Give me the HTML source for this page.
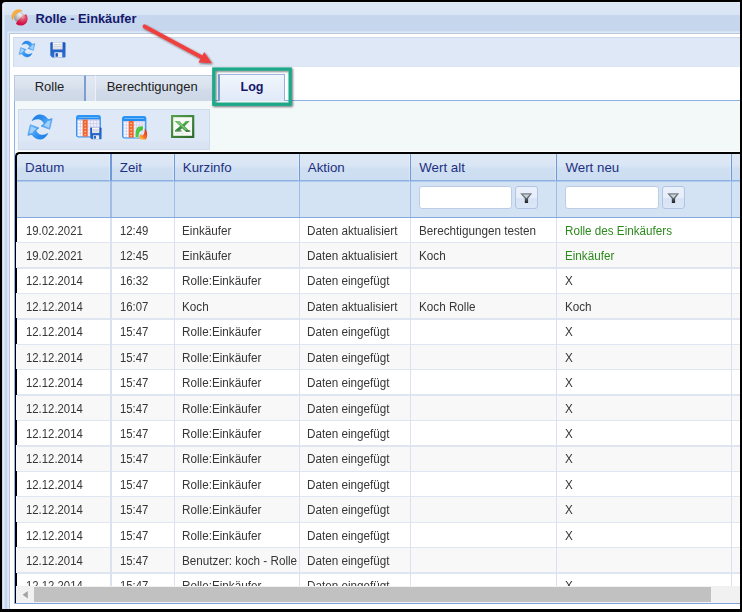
<!DOCTYPE html>
<html lang="de">
<head>
<meta charset="utf-8">
<title>Rolle - Einkäufer</title>
<style>
html,body{margin:0;padding:0;}
body{width:742px;height:612px;overflow:hidden;background:#000;position:relative;font-family:"Liberation Sans",Arial,sans-serif;}
div,span{box-sizing:border-box;}
.abs{position:absolute;}
#win{position:absolute;left:2px;top:2px;width:738px;height:607.4px;overflow:hidden;border-top-left-radius:4px;
 background:linear-gradient(#e4ecf8 0,#dce7f6 1.5px,#d9e5f5 12.8px,#c6d7ee 13.4px,#c4d5ed 40px,#c4d5ed 100%);}
/* left frame bands */
#lf{position:absolute;left:0;top:0;width:2.8px;height:610px;
 background:linear-gradient(90deg,#9fb0c8 0,#e4ecf8 0.8px,#e6eef9 2.2px,rgba(230,238,249,0) 2.8px);}
#body{position:absolute;left:7.6px;top:32px;width:733px;height:578px;background:#fff;box-shadow:0 0 0 1.1px #b7c7de,0 0 0 2.6px #e3ebf6;}
#title{position:absolute;left:33.4px;top:8.6px;font-weight:bold;font-size:12.8px;line-height:16px;color:#15186b;white-space:nowrap;}
#tb1{position:absolute;left:11px;top:35px;width:730px;height:30.4px;background:linear-gradient(#ccd8ea 0,#ccd8ea 0.8px,#dfe8f6 1.2px,#dfe8f6 28.8px,#d9e3f2 29.4px,#e9eff8 30.4px);border-left:1px solid #d3ddee;}
#strip{position:absolute;left:12px;top:65px;width:728px;height:34px;background:#fff;border-bottom:1px solid #8db2e3;}
.tab{position:absolute;top:73px;height:25.6px;font-size:13px;line-height:16px;color:#222;text-align:center;padding-top:2.9px;white-space:nowrap;
 background:linear-gradient(#e0e8f2 0,#dae2ee 40%,#d2dbe9 60%,#cdd7e6 100%);border-top:1px solid #b9c9e2;}
#panel{position:absolute;left:12px;top:99px;width:728px;height:502.4px;background:#f3f8f9;border-left:1px solid #8db2e3;}
#tb2{position:absolute;left:16px;top:107px;width:192px;height:41px;border:1px solid #cfdaeb;
 background:linear-gradient(#dfe8f6 0,#dfe8f6 76%,#dae4f4 82%,#d8e3f4 100%);}
#grid{position:absolute;left:12px;top:148.6px;width:728px;height:452.8px;background:#fff;border-left:1px solid #8db2e3;overflow:hidden;}
#gleft{position:absolute;left:13px;top:150px;width:740px;height:450.5px;border-left:2px solid #000;border-top:2px solid #000;border-top-left-radius:4.5px;}
#hdr{position:absolute;left:15px;top:152px;width:725px;height:64px;background:linear-gradient(#dde8f5 0,#dde8f5 1px,#dae6f5 11px,#cfdff2 15px,#cddef2 25.8px,#8db0e2 26.2px,#8db0e2 27.3px,#d3e3f4 27.7px,#d3e3f4 62.5px,#84a9de 62.9px,#84a9de 64px);}
.hs{position:absolute;top:152px;height:26.6px;width:4px;}
.fs{position:absolute;top:178.6px;height:36.8px;width:4px;}
.ht{position:absolute;top:158.2px;margin-left:0.8px;font-size:13.3px;line-height:16px;color:#1d3080;white-space:nowrap;}
.ds{position:absolute;top:216px;height:367.8px;width:4px;}
#rows{position:absolute;left:0;top:0;width:740px;height:583.8px;overflow:hidden;}
.row{position:absolute;left:0;width:740px;height:24px;}
#rowbg{position:absolute;left:15px;width:725px;height:368.4px;}
#rowbg2{position:absolute;left:14px;width:1px;height:368.4px;}
.c{position:absolute;top:0;height:24px;font-size:12px;line-height:24px;color:#363636;white-space:nowrap;overflow:hidden;}
.c.g{color:#2c8a1c;}
.t{display:inline-block;transform-origin:0 50%;}
.fin{position:absolute;top:183.9px;height:22.8px;background:#fff;border:1px solid #bccde8;border-radius:3px;}
.fbt{position:absolute;top:183.9px;height:22.8px;width:23.3px;border:1px solid #b1c4e3;border-radius:3px;background:linear-gradient(#ebf1fb 0,#e7eefa 50%,#d8e4f5 54%,#dbe6f6 100%);}
#sb{position:absolute;left:14px;top:583.8px;width:726px;height:17.2px;background:#f1f1f1;}
#thumb{position:absolute;left:18.3px;top:1.2px;width:676.6px;height:14.9px;background:#c1c1c1;}
#gbot{position:absolute;left:12px;top:600.5px;width:728px;height:1px;background:#7da5dd;}
</style>
</head>
<body>
<div id="win">
  <div id="lf"></div>
  <div id="body"></div>
  <svg class="abs" style="left:6.00px;top:4.00px;overflow:visible" width="24" height="24" viewBox="8 6 24 24" >
<defs>
<radialGradient id="tiS" cx="0.55" cy="0.28" r="0.7"><stop offset="0" stop-color="#f4f4f4"/><stop offset="0.45" stop-color="#c4c4c7"/><stop offset="1" stop-color="#919196"/></radialGradient>
<radialGradient id="tiR" gradientUnits="userSpaceOnUse" cx="22.6" cy="16.8" r="7.5"><stop offset="0" stop-color="#f0a0aa"/><stop offset="0.45" stop-color="#e04867"/><stop offset="1" stop-color="#d00f46"/></radialGradient>
<linearGradient id="tiO" gradientUnits="userSpaceOnUse" x1="13.5" y1="11.5" x2="19.2" y2="17.2"><stop offset="0" stop-color="#f9b654"/><stop offset="0.55" stop-color="#f4a532"/><stop offset="0.72" stop-color="#e2962f"/><stop offset="0.9" stop-color="#8f6a34"/></linearGradient>
</defs>
<circle cx="19.3" cy="17.2" r="5.4" fill="url(#tiS)"/>
<path d="M12.7,20.5 A7 7 0 0 1 22.9,11.05 A12.5 12.5 0 0 0 12.7,20.5 Z" fill="url(#tiO)"/>
<path d="M26.05,14.1 A7 7 0 0 1 15.9,23.7 A25 25 0 0 1 26.05,14.1 Z" fill="url(#tiR)"/>
</svg>
  <div id="title">Rolle - Einkäufer</div>
  <div id="tb1"></div>
  <svg class="abs" style="left:11.20px;top:33.00px;overflow:visible" width="28" height="28" viewBox="-14 -14 28 28" >
<defs>
<linearGradient id="r16a" gradientUnits="userSpaceOnUse" x1="-8" y1="-12" x2="10" y2="2"><stop offset="0" stop-color="#1a79e4"/><stop offset="0.45" stop-color="#2f8ff0"/><stop offset="0.75" stop-color="#55a8f5"/><stop offset="1" stop-color="#7dbdf8"/></linearGradient>
</defs>
<g transform="scale(0.656)">
<g><path d="M-7.9,-6.3 C-6.5,-9.6 -3.5,-12.2 -0.5,-12.2 C3.4,-12.2 6.4,-10.2 8.1,-7.4 L12.2,-8.4 L9.7,2.3 L1.1,-0.9 L4.2,-3.4 C3,-6 0.8,-8 -1.7,-8.1 C-4,-8.2 -6,-7.5 -7.9,-6.3 Z" fill="url(#r16a)" stroke="#2283e8" stroke-width="0.5" stroke-linejoin="round"/><path d="M10.7,-6.6 L8.9,0.6 L3.4,-1.5 L6.2,-3.9 L7.4,-5.8 Z" fill="#a9d6fb" opacity="0.9"/></g>
<g transform="rotate(180)"><path d="M-7.9,-6.3 C-6.5,-9.6 -3.5,-12.2 -0.5,-12.2 C3.4,-12.2 6.4,-10.2 8.1,-7.4 L12.2,-8.4 L9.7,2.3 L1.1,-0.9 L4.2,-3.4 C3,-6 0.8,-8 -1.7,-8.1 C-4,-8.2 -6,-7.5 -7.9,-6.3 Z" fill="url(#r16a)" stroke="#2283e8" stroke-width="0.5" stroke-linejoin="round"/><path d="M10.7,-6.6 L8.9,0.6 L3.4,-1.5 L6.2,-3.9 L7.4,-5.8 Z" fill="#a9d6fb" opacity="0.9"/></g>
</g>
</svg><svg class="abs" style="left:48.00px;top:40.20px;overflow:visible" width="15.8" height="15.8" viewBox="0 0 16 16" >
<defs><linearGradient id="s16f" x1="0" y1="0" x2="0" y2="1"><stop offset="0" stop-color="#1b55b8"/><stop offset="1" stop-color="#2b6fd6"/></linearGradient>
<linearGradient id="s16l" x1="0" y1="0" x2="0" y2="1"><stop offset="0" stop-color="#ffffff"/><stop offset="1" stop-color="#d9dce2"/></linearGradient></defs>
<path d="M1.4,0.3 H14.6 Q15.7,0.3 15.7,1.4 V14.6 Q15.7,15.7 14.6,15.7 H2.2 L0.3,13.8 V1.4 Q0.3,0.3 1.4,0.3 Z" fill="url(#s16f)"/>
<rect x="2.8" y="0.3" width="9.9" height="7.3" fill="url(#s16l)"/>
<rect x="3.6" y="2.2" width="8.3" height="0.8" fill="#c9ccd3"/>
<rect x="3.6" y="4.2" width="8.3" height="0.8" fill="#c9ccd3"/>
<rect x="4.4" y="10.4" width="8" height="5.3" fill="#e9eaee"/>
<rect x="5.6" y="11.3" width="2.4" height="3.6" fill="#1d56b6"/>
</svg>
  <div id="strip"></div>
  <div class="tab" style="left:12px;width:72px;border-left:1px solid #b9c9e2;border-right:2px solid #7c9fd2;">Rolle</div>
  <div class="tab" style="left:84px;width:9.5px;background:linear-gradient(#e2e9f3,#d6dfec);border-right:1px solid #eef2f8;"></div>
  <div class="tab" style="left:93.5px;width:118px;padding-right:4.6px">Berechtigungen</div>
  <div class="tab" style="left:216px;top:71.5px;height:27.6px;width:67px;padding-top:4.3px;font-weight:bold;color:#15186b;font-size:12.6px;background:linear-gradient(#f1f6fc 0,#e9f0fa 50%,#dfe9f8 100%);border-top:1px solid #9db9e2;border-left:2px solid #7c9fd2;border-right:1px solid #8db2e3;">Log</div>
  <div id="panel"></div>
  <div id="tb2"></div>
  <svg class="abs" style="left:24.33px;top:111.10px;overflow:visible" width="28" height="28" viewBox="-14 -14 28 28" >
<defs>
<linearGradient id="r24a" gradientUnits="userSpaceOnUse" x1="-8" y1="-12" x2="10" y2="2"><stop offset="0" stop-color="#1a79e4"/><stop offset="0.45" stop-color="#2f8ff0"/><stop offset="0.75" stop-color="#55a8f5"/><stop offset="1" stop-color="#7dbdf8"/></linearGradient>
</defs>
<g transform="scale(1.0)">
<g><path d="M-7.9,-6.3 C-6.5,-9.6 -3.5,-12.2 -0.5,-12.2 C3.4,-12.2 6.4,-10.2 8.1,-7.4 L12.2,-8.4 L9.7,2.3 L1.1,-0.9 L4.2,-3.4 C3,-6 0.8,-8 -1.7,-8.1 C-4,-8.2 -6,-7.5 -7.9,-6.3 Z" fill="url(#r24a)" stroke="#2283e8" stroke-width="0.5" stroke-linejoin="round"/><path d="M10.7,-6.6 L8.9,0.6 L3.4,-1.5 L6.2,-3.9 L7.4,-5.8 Z" fill="#a9d6fb" opacity="0.9"/></g>
<g transform="rotate(180)"><path d="M-7.9,-6.3 C-6.5,-9.6 -3.5,-12.2 -0.5,-12.2 C3.4,-12.2 6.4,-10.2 8.1,-7.4 L12.2,-8.4 L9.7,2.3 L1.1,-0.9 L4.2,-3.4 C3,-6 0.8,-8 -1.7,-8.1 C-4,-8.2 -6,-7.5 -7.9,-6.3 Z" fill="url(#r24a)" stroke="#2283e8" stroke-width="0.5" stroke-linejoin="round"/><path d="M10.7,-6.6 L8.9,0.6 L3.4,-1.5 L6.2,-3.9 L7.4,-5.8 Z" fill="#a9d6fb" opacity="0.9"/></g>
</g>
</svg><svg class="abs" style="left:74.30px;top:112.70px;overflow:visible" width="26" height="25" viewBox="0 0 26 25" ><rect x="0.65" y="0.65" width="23.60" height="21.20" rx="1.8" fill="#cbc9e8" stroke="#2e97f6" stroke-width="1.3"/><path d="M1,2 Q1,1 2,1 H22.90 Q23.90,1 23.90,2 V4.60 H1 Z" fill="#1f8df2"/><rect x="2.2" y="1.9" width="20.50" height="1.0" fill="#74bcfa"/><rect x="1.70" y="4.60" width="21.60" height="16.70" fill="#d2d0ec"/><rect x="2.15" y="5.95" width="1.65" height="2.26" fill="#ffffff"/><rect x="4.70" y="5.95" width="1.65" height="2.26" fill="#ffffff"/><rect x="12.05" y="5.95" width="2.02" height="2.26" fill="#f1effa"/><rect x="14.97" y="5.95" width="2.02" height="2.26" fill="#f1effa"/><rect x="17.90" y="5.95" width="2.02" height="2.26" fill="#f1effa"/><rect x="20.82" y="5.95" width="2.02" height="2.26" fill="#f1effa"/><rect x="2.15" y="9.11" width="1.65" height="2.26" fill="#ffffff"/><rect x="4.70" y="9.11" width="1.65" height="2.26" fill="#ffffff"/><rect x="12.05" y="9.11" width="2.02" height="2.26" fill="#f1effa"/><rect x="14.97" y="9.11" width="2.02" height="2.26" fill="#f1effa"/><rect x="17.90" y="9.11" width="2.02" height="2.26" fill="#f1effa"/><rect x="20.82" y="9.11" width="2.02" height="2.26" fill="#f1effa"/><rect x="2.15" y="12.27" width="1.65" height="2.26" fill="#ffffff"/><rect x="4.70" y="12.27" width="1.65" height="2.26" fill="#ffffff"/><rect x="12.05" y="12.27" width="2.02" height="2.26" fill="#f1effa"/><rect x="14.97" y="12.27" width="2.02" height="2.26" fill="#f1effa"/><rect x="17.90" y="12.27" width="2.02" height="2.26" fill="#f1effa"/><rect x="20.82" y="12.27" width="2.02" height="2.26" fill="#f1effa"/><rect x="2.15" y="15.43" width="1.65" height="2.26" fill="#ffffff"/><rect x="4.70" y="15.43" width="1.65" height="2.26" fill="#ffffff"/><rect x="12.05" y="15.43" width="2.02" height="2.26" fill="#f1effa"/><rect x="14.97" y="15.43" width="2.02" height="2.26" fill="#f1effa"/><rect x="17.90" y="15.43" width="2.02" height="2.26" fill="#f1effa"/><rect x="20.82" y="15.43" width="2.02" height="2.26" fill="#f1effa"/><rect x="2.15" y="18.59" width="1.65" height="2.26" fill="#ffffff"/><rect x="4.70" y="18.59" width="1.65" height="2.26" fill="#ffffff"/><rect x="12.05" y="18.59" width="2.02" height="2.26" fill="#f1effa"/><rect x="14.97" y="18.59" width="2.02" height="2.26" fill="#f1effa"/><rect x="17.90" y="18.59" width="2.02" height="2.26" fill="#f1effa"/><rect x="20.82" y="18.59" width="2.02" height="2.26" fill="#f1effa"/><rect x="6.80" y="4.60" width="4.80" height="17.00" fill="#f3632b"/><rect x="8.30" y="6.38" width="1.80" height="1.4" fill="#fcb488"/><rect x="8.30" y="9.54" width="1.80" height="1.4" fill="#fcb488"/><rect x="8.30" y="12.70" width="1.80" height="1.4" fill="#fcb488"/><rect x="8.30" y="15.86" width="1.80" height="1.4" fill="#fcb488"/><rect x="8.30" y="19.02" width="1.80" height="1.4" fill="#fcb488"/><g transform="translate(14.0,12.3) scale(0.735,0.765)">
<defs><linearGradient id="tsff" x1="0" y1="0" x2="0" y2="1"><stop offset="0" stop-color="#1b55b8"/><stop offset="1" stop-color="#2b6fd6"/></linearGradient>
<linearGradient id="tsfl" x1="0" y1="0" x2="0" y2="1"><stop offset="0" stop-color="#ffffff"/><stop offset="1" stop-color="#d9dce2"/></linearGradient></defs>
<path d="M1.4,0.3 H14.6 Q15.7,0.3 15.7,1.4 V14.6 Q15.7,15.7 14.6,15.7 H2.2 L0.3,13.8 V1.4 Q0.3,0.3 1.4,0.3 Z" fill="url(#tsff)"/>
<rect x="2.8" y="0.3" width="9.9" height="7.3" fill="url(#tsfl)"/>
<rect x="3.6" y="2.2" width="8.3" height="0.8" fill="#c9ccd3"/>
<rect x="3.6" y="4.2" width="8.3" height="0.8" fill="#c9ccd3"/>
<rect x="4.4" y="10.4" width="8" height="5.3" fill="#e9eaee"/>
<rect x="5.6" y="11.3" width="2.4" height="3.6" fill="#1d56b6"/>
</g></svg><svg class="abs" style="left:119.70px;top:113.80px;overflow:visible" width="26" height="24" viewBox="0 0 26 24" ><rect x="0.65" y="0.65" width="23.10" height="21.20" rx="1.8" fill="#cbc9e8" stroke="#2e97f6" stroke-width="1.3"/><path d="M1,2 Q1,1 2,1 H22.40 Q23.40,1 23.40,2 V5.00 H1 Z" fill="#1f8df2"/><rect x="2.2" y="1.9" width="20.00" height="1.0" fill="#74bcfa"/><rect x="1.70" y="5.00" width="21.10" height="16.30" fill="#d2d0ec"/><rect x="2.15" y="6.35" width="1.65" height="2.18" fill="#ffffff"/><rect x="4.70" y="6.35" width="1.65" height="2.18" fill="#ffffff"/><rect x="12.05" y="6.35" width="1.90" height="2.18" fill="#f1effa"/><rect x="14.85" y="6.35" width="1.90" height="2.18" fill="#f1effa"/><rect x="17.65" y="6.35" width="1.90" height="2.18" fill="#f1effa"/><rect x="20.45" y="6.35" width="1.90" height="2.18" fill="#f1effa"/><rect x="2.15" y="9.43" width="1.65" height="2.18" fill="#ffffff"/><rect x="4.70" y="9.43" width="1.65" height="2.18" fill="#ffffff"/><rect x="12.05" y="9.43" width="1.90" height="2.18" fill="#f1effa"/><rect x="14.85" y="9.43" width="1.90" height="2.18" fill="#f1effa"/><rect x="17.65" y="9.43" width="1.90" height="2.18" fill="#f1effa"/><rect x="20.45" y="9.43" width="1.90" height="2.18" fill="#f1effa"/><rect x="2.15" y="12.51" width="1.65" height="2.18" fill="#ffffff"/><rect x="4.70" y="12.51" width="1.65" height="2.18" fill="#ffffff"/><rect x="12.05" y="12.51" width="1.90" height="2.18" fill="#f1effa"/><rect x="14.85" y="12.51" width="1.90" height="2.18" fill="#f1effa"/><rect x="17.65" y="12.51" width="1.90" height="2.18" fill="#f1effa"/><rect x="20.45" y="12.51" width="1.90" height="2.18" fill="#f1effa"/><rect x="2.15" y="15.59" width="1.65" height="2.18" fill="#ffffff"/><rect x="4.70" y="15.59" width="1.65" height="2.18" fill="#ffffff"/><rect x="12.05" y="15.59" width="1.90" height="2.18" fill="#f1effa"/><rect x="14.85" y="15.59" width="1.90" height="2.18" fill="#f1effa"/><rect x="17.65" y="15.59" width="1.90" height="2.18" fill="#f1effa"/><rect x="20.45" y="15.59" width="1.90" height="2.18" fill="#f1effa"/><rect x="2.15" y="18.67" width="1.65" height="2.18" fill="#ffffff"/><rect x="4.70" y="18.67" width="1.65" height="2.18" fill="#ffffff"/><rect x="12.05" y="18.67" width="1.90" height="2.18" fill="#f1effa"/><rect x="14.85" y="18.67" width="1.90" height="2.18" fill="#f1effa"/><rect x="17.65" y="18.67" width="1.90" height="2.18" fill="#f1effa"/><rect x="20.45" y="18.67" width="1.90" height="2.18" fill="#f1effa"/><rect x="6.80" y="5.00" width="4.80" height="16.60" fill="#f3632b"/><rect x="8.30" y="6.74" width="1.80" height="1.4" fill="#fcb488"/><rect x="8.30" y="9.82" width="1.80" height="1.4" fill="#fcb488"/><rect x="8.30" y="12.90" width="1.80" height="1.4" fill="#fcb488"/><rect x="8.30" y="15.98" width="1.80" height="1.4" fill="#fcb488"/><rect x="8.30" y="19.06" width="1.80" height="1.4" fill="#fcb488"/>
<defs><linearGradient id="trg" x1="0" y1="0" x2="1" y2="0.6"><stop offset="0" stop-color="#1d8a22"/><stop offset="0.45" stop-color="#4fd048"/><stop offset="1" stop-color="#27a02b"/></linearGradient>
<linearGradient id="trf" x1="0.9" y1="0.1" x2="0.25" y2="0.95"><stop offset="0" stop-color="#d2301c"/><stop offset="0.45" stop-color="#f0541f"/><stop offset="0.8" stop-color="#fb8d2c"/><stop offset="1" stop-color="#fdb644"/></linearGradient></defs>
<path d="M13.3,21.4 C13.0,15 14.4,10.5 17.6,10.2 L21.1,9.9 L20.9,14.6 C18.1,14.6 16.9,16.2 16.8,21.4 Z" fill="url(#trg)" stroke="#e9f3e6" stroke-width="0.5"/>
<path d="M22.8,12.5 C25.7,15.5 25.9,20.5 23.9,23.4 L17.9,23.4 C16.8,21.6 17.4,19.3 18.8,18.5 C19.5,19.7 20.7,19.8 21.5,18.6 C22.6,17 22.9,14.8 22.8,12.5 Z" fill="url(#trf)"/>
</svg><svg class="abs" style="left:169.30px;top:113.00px;overflow:visible" width="23.3" height="23" viewBox="0 0 23.3 23" >
<defs><linearGradient id="exb" x1="0" y1="0" x2="1" y2="1"><stop offset="0" stop-color="#55a04c"/><stop offset="1" stop-color="#2a6a2c"/></linearGradient>
<linearGradient id="exx" x1="0" y1="0" x2="0" y2="1"><stop offset="0" stop-color="#58b552"/><stop offset="1" stop-color="#1f7d2a"/></linearGradient></defs>
<rect x="1.1" y="1.1" width="21.1" height="20.8" fill="#f7f9f5" stroke="url(#exb)" stroke-width="2.2"/>
<path d="M3.6,5.9 H8.4 L11.6,9.4 L14.8,5.9 H18.9 L13.6,11.2 L18.6,16.2 L15.2,16.9 L11.2,13.2 L8.4,15.6 H3.9 L9.2,10.9 Z" fill="url(#exx)"/>
<path d="M5.2,6.3 L7.6,6.3 L17.6,16.1 L15.6,16.5 Z" fill="#8fd088" opacity="0.75"/>
<path d="M4.0,15.5 H10.6 V16.6 H4.0 Z M15,15.5 H19.4 V16.6 H15 Z" fill="#1c5a22"/>
<path d="M5.5,18 H8.4 V18.7 H5.5 Z M10,18 H12.8 V18.7 H10 Z" fill="#d6e8d2"/>
</svg>
  <div id="grid"></div>
  <div id="hdr"></div>
  <div id="gleft"></div>
  <div id="rows">
<div id="rowbg" style="top:215.40px;background:linear-gradient(#84a9de 0px,#84a9de 0.55px,#ffffff 0.95px,#ffffff 24.97px,#dfe5f1 24.97px,#dfe5f1 26.27px,#f8f8f8 26.27px,#f8f8f8 50.39px,#dfe5f1 50.39px,#dfe5f1 51.69px,#ffffff 51.69px,#ffffff 75.81px,#dfe5f1 75.81px,#dfe5f1 77.11px,#f8f8f8 77.11px,#f8f8f8 101.23px,#dfe5f1 101.23px,#dfe5f1 102.53px,#ffffff 102.53px,#ffffff 126.65px,#dfe5f1 126.65px,#dfe5f1 127.95px,#f8f8f8 127.95px,#f8f8f8 152.07px,#dfe5f1 152.07px,#dfe5f1 153.37px,#ffffff 153.37px,#ffffff 177.49px,#dfe5f1 177.49px,#dfe5f1 178.79px,#f8f8f8 178.79px,#f8f8f8 202.91px,#dfe5f1 202.91px,#dfe5f1 204.21px,#ffffff 204.21px,#ffffff 228.33px,#dfe5f1 228.33px,#dfe5f1 229.63px,#f8f8f8 229.63px,#f8f8f8 253.75px,#dfe5f1 253.75px,#dfe5f1 255.05px,#ffffff 255.05px,#ffffff 279.17px,#dfe5f1 279.17px,#dfe5f1 280.47px,#f8f8f8 280.47px,#f8f8f8 304.59px,#dfe5f1 304.59px,#dfe5f1 305.89px,#ffffff 305.89px,#ffffff 330.01px,#dfe5f1 330.01px,#dfe5f1 331.31px,#f8f8f8 331.31px,#f8f8f8 355.43px,#dfe5f1 355.43px,#dfe5f1 356.73px,#ffffff 356.73px,#ffffff 380.85px,#dfe5f1 380.85px,#dfe5f1 382.15px,#f8f8f8 382.15px,#f8f8f8 406.27px)"></div><div id="rowbg2" style="top:215.40px;background:linear-gradient(#000 0.00px,#000 25.12px,#f8f8f8 25.12px,#f8f8f8 50.54px,#000 50.54px,#000 75.96px,#f8f8f8 75.96px,#f8f8f8 101.38px,#000 101.38px,#000 126.80px,#f8f8f8 126.80px,#f8f8f8 152.22px,#000 152.22px,#000 177.64px,#f8f8f8 177.64px,#f8f8f8 203.06px,#000 203.06px,#000 228.48px,#f8f8f8 228.48px,#f8f8f8 253.90px,#000 253.90px,#000 279.32px,#f8f8f8 279.32px,#f8f8f8 304.74px,#000 304.74px,#000 330.16px,#f8f8f8 330.16px,#f8f8f8 355.58px,#000 355.58px,#000 381.00px,#f8f8f8 381.00px,#f8f8f8 406.42px)"></div>
<div class="row" style="top:217px"><span class="c" style="left:23.6px;width:84.4px"><span class="t" style="transform:scaleX(0.945)">19.02.2021</span></span><span class="c" style="left:118.2px;width:52.8px"><span class="t" style="transform:scaleX(0.945)">12:49</span></span><span class="c" style="left:180.3px;width:116.2px"><span class="t" style="transform:scaleX(0.975)">Einkäufer</span></span><span class="c" style="left:304.9px;width:102.4px"><span class="t" style="transform:scaleX(0.975)">Daten aktualisiert</span></span><span class="c" style="left:417.1px;width:136.5px"><span class="t" style="transform:scaleX(0.975)">Berechtigungen testen</span></span><span class="c g" style="left:562.9px;width:165.8px"><span class="t" style="transform:scaleX(0.972)">Rolle des Einkäufers</span></span></div>
<div class="row" style="top:242px"><span class="c" style="left:23.6px;width:84.4px"><span class="t" style="transform:scaleX(0.945)">19.02.2021</span></span><span class="c" style="left:118.2px;width:52.8px"><span class="t" style="transform:scaleX(0.945)">12:45</span></span><span class="c" style="left:180.3px;width:116.2px"><span class="t" style="transform:scaleX(0.975)">Einkäufer</span></span><span class="c" style="left:304.9px;width:102.4px"><span class="t" style="transform:scaleX(0.975)">Daten aktualisiert</span></span><span class="c" style="left:417.1px;width:136.5px"><span class="t" style="transform:scaleX(0.975)">Koch</span></span><span class="c g" style="left:562.9px;width:165.8px"><span class="t" style="transform:scaleX(0.972)">Einkäufer</span></span></div>
<div class="row" style="top:267px"><span class="c" style="left:23.6px;width:84.4px"><span class="t" style="transform:scaleX(0.945)">12.12.2014</span></span><span class="c" style="left:118.2px;width:52.8px"><span class="t" style="transform:scaleX(0.945)">16:32</span></span><span class="c" style="left:180.3px;width:116.2px"><span class="t" style="transform:scaleX(0.975)">Rolle:Einkäufer</span></span><span class="c" style="left:304.9px;width:102.4px"><span class="t" style="transform:scaleX(0.975)">Daten eingefügt</span></span><span class="c" style="left:562.9px;width:165.8px"><span class="t" style="transform:scaleX(0.972)">X</span></span></div>
<div class="row" style="top:293px"><span class="c" style="left:23.6px;width:84.4px"><span class="t" style="transform:scaleX(0.945)">12.12.2014</span></span><span class="c" style="left:118.2px;width:52.8px"><span class="t" style="transform:scaleX(0.945)">16:07</span></span><span class="c" style="left:180.3px;width:116.2px"><span class="t" style="transform:scaleX(0.975)">Koch</span></span><span class="c" style="left:304.9px;width:102.4px"><span class="t" style="transform:scaleX(0.975)">Daten aktualisiert</span></span><span class="c" style="left:417.1px;width:136.5px"><span class="t" style="transform:scaleX(0.975)">Koch Rolle</span></span><span class="c" style="left:562.9px;width:165.8px"><span class="t" style="transform:scaleX(0.972)">Koch</span></span></div>
<div class="row" style="top:318px"><span class="c" style="left:23.6px;width:84.4px"><span class="t" style="transform:scaleX(0.945)">12.12.2014</span></span><span class="c" style="left:118.2px;width:52.8px"><span class="t" style="transform:scaleX(0.945)">15:47</span></span><span class="c" style="left:180.3px;width:116.2px"><span class="t" style="transform:scaleX(0.975)">Rolle:Einkäufer</span></span><span class="c" style="left:304.9px;width:102.4px"><span class="t" style="transform:scaleX(0.975)">Daten eingefügt</span></span><span class="c" style="left:562.9px;width:165.8px"><span class="t" style="transform:scaleX(0.972)">X</span></span></div>
<div class="row" style="top:344px"><span class="c" style="left:23.6px;width:84.4px"><span class="t" style="transform:scaleX(0.945)">12.12.2014</span></span><span class="c" style="left:118.2px;width:52.8px"><span class="t" style="transform:scaleX(0.945)">15:47</span></span><span class="c" style="left:180.3px;width:116.2px"><span class="t" style="transform:scaleX(0.975)">Rolle:Einkäufer</span></span><span class="c" style="left:304.9px;width:102.4px"><span class="t" style="transform:scaleX(0.975)">Daten eingefügt</span></span><span class="c" style="left:562.9px;width:165.8px"><span class="t" style="transform:scaleX(0.972)">X</span></span></div>
<div class="row" style="top:369px"><span class="c" style="left:23.6px;width:84.4px"><span class="t" style="transform:scaleX(0.945)">12.12.2014</span></span><span class="c" style="left:118.2px;width:52.8px"><span class="t" style="transform:scaleX(0.945)">15:47</span></span><span class="c" style="left:180.3px;width:116.2px"><span class="t" style="transform:scaleX(0.975)">Rolle:Einkäufer</span></span><span class="c" style="left:304.9px;width:102.4px"><span class="t" style="transform:scaleX(0.975)">Daten eingefügt</span></span><span class="c" style="left:562.9px;width:165.8px"><span class="t" style="transform:scaleX(0.972)">X</span></span></div>
<div class="row" style="top:395px"><span class="c" style="left:23.6px;width:84.4px"><span class="t" style="transform:scaleX(0.945)">12.12.2014</span></span><span class="c" style="left:118.2px;width:52.8px"><span class="t" style="transform:scaleX(0.945)">15:47</span></span><span class="c" style="left:180.3px;width:116.2px"><span class="t" style="transform:scaleX(0.975)">Rolle:Einkäufer</span></span><span class="c" style="left:304.9px;width:102.4px"><span class="t" style="transform:scaleX(0.975)">Daten eingefügt</span></span><span class="c" style="left:562.9px;width:165.8px"><span class="t" style="transform:scaleX(0.972)">X</span></span></div>
<div class="row" style="top:420px"><span class="c" style="left:23.6px;width:84.4px"><span class="t" style="transform:scaleX(0.945)">12.12.2014</span></span><span class="c" style="left:118.2px;width:52.8px"><span class="t" style="transform:scaleX(0.945)">15:47</span></span><span class="c" style="left:180.3px;width:116.2px"><span class="t" style="transform:scaleX(0.975)">Rolle:Einkäufer</span></span><span class="c" style="left:304.9px;width:102.4px"><span class="t" style="transform:scaleX(0.975)">Daten eingefügt</span></span><span class="c" style="left:562.9px;width:165.8px"><span class="t" style="transform:scaleX(0.972)">X</span></span></div>
<div class="row" style="top:445px"><span class="c" style="left:23.6px;width:84.4px"><span class="t" style="transform:scaleX(0.945)">12.12.2014</span></span><span class="c" style="left:118.2px;width:52.8px"><span class="t" style="transform:scaleX(0.945)">15:47</span></span><span class="c" style="left:180.3px;width:116.2px"><span class="t" style="transform:scaleX(0.975)">Rolle:Einkäufer</span></span><span class="c" style="left:304.9px;width:102.4px"><span class="t" style="transform:scaleX(0.975)">Daten eingefügt</span></span><span class="c" style="left:562.9px;width:165.8px"><span class="t" style="transform:scaleX(0.972)">X</span></span></div>
<div class="row" style="top:471px"><span class="c" style="left:23.6px;width:84.4px"><span class="t" style="transform:scaleX(0.945)">12.12.2014</span></span><span class="c" style="left:118.2px;width:52.8px"><span class="t" style="transform:scaleX(0.945)">15:47</span></span><span class="c" style="left:180.3px;width:116.2px"><span class="t" style="transform:scaleX(0.975)">Rolle:Einkäufer</span></span><span class="c" style="left:304.9px;width:102.4px"><span class="t" style="transform:scaleX(0.975)">Daten eingefügt</span></span><span class="c" style="left:562.9px;width:165.8px"><span class="t" style="transform:scaleX(0.972)">X</span></span></div>
<div class="row" style="top:496px"><span class="c" style="left:23.6px;width:84.4px"><span class="t" style="transform:scaleX(0.945)">12.12.2014</span></span><span class="c" style="left:118.2px;width:52.8px"><span class="t" style="transform:scaleX(0.945)">15:47</span></span><span class="c" style="left:180.3px;width:116.2px"><span class="t" style="transform:scaleX(0.975)">Rolle:Einkäufer</span></span><span class="c" style="left:304.9px;width:102.4px"><span class="t" style="transform:scaleX(0.975)">Daten eingefügt</span></span><span class="c" style="left:562.9px;width:165.8px"><span class="t" style="transform:scaleX(0.972)">X</span></span></div>
<div class="row" style="top:522px"><span class="c" style="left:23.6px;width:84.4px"><span class="t" style="transform:scaleX(0.945)">12.12.2014</span></span><span class="c" style="left:118.2px;width:52.8px"><span class="t" style="transform:scaleX(0.945)">15:47</span></span><span class="c" style="left:180.3px;width:116.2px"><span class="t" style="transform:scaleX(0.975)">Rolle:Einkäufer</span></span><span class="c" style="left:304.9px;width:102.4px"><span class="t" style="transform:scaleX(0.975)">Daten eingefügt</span></span><span class="c" style="left:562.9px;width:165.8px"><span class="t" style="transform:scaleX(0.972)">X</span></span></div>
<div class="row" style="top:547px"><span class="c" style="left:23.6px;width:84.4px"><span class="t" style="transform:scaleX(0.945)">12.12.2014</span></span><span class="c" style="left:118.2px;width:52.8px"><span class="t" style="transform:scaleX(0.945)">15:47</span></span><span class="c" style="left:180.3px;width:116.2px"><span class="t" style="transform:scaleX(0.975)">Benutzer: koch - Rolle</span></span><span class="c" style="left:304.9px;width:102.4px"><span class="t" style="transform:scaleX(0.975)">Daten eingefügt</span></span></div>
<div class="row" style="top:572px"><span class="c" style="left:23.6px;width:84.4px"><span class="t" style="transform:scaleX(0.945)">12.12.2014</span></span><span class="c" style="left:118.2px;width:52.8px"><span class="t" style="transform:scaleX(0.945)">15:47</span></span><span class="c" style="left:180.3px;width:116.2px"><span class="t" style="transform:scaleX(0.975)">Rolle:Einkäufer</span></span><span class="c" style="left:304.9px;width:102.4px"><span class="t" style="transform:scaleX(0.975)">Daten eingefügt</span></span><span class="c" style="left:562.9px;width:165.8px"><span class="t" style="transform:scaleX(0.972)">X</span></span></div>
  </div>
  <div class="ds" style="left:107px;background:linear-gradient(90deg,rgba(0,0,0,0) 1.50px,#dbe1ef 1.50px,#dbe1ef 2.65px,rgba(0,0,0,0) 2.65px)"></div>
  <div class="hs" style="left:107px;background:linear-gradient(90deg,rgba(0,0,0,0) 0.50px,rgba(236,242,250,0.45) 0.50px,rgba(236,242,250,0.45) 1.50px,#6f9ad8 1.50px,#6f9ad8 2.75px,rgba(0,0,0,0) 2.75px)"></div>
  <div class="fs" style="left:107px;background:linear-gradient(90deg,rgba(0,0,0,0) 1.50px,#a2bde5 1.50px,#a2bde5 2.60px,rgba(0,0,0,0) 2.60px)"></div>
  <div class="ds" style="left:170px;background:linear-gradient(90deg,rgba(0,0,0,0) 1.60px,#dbe1ef 1.60px,#dbe1ef 2.75px,rgba(0,0,0,0) 2.75px)"></div>
  <div class="hs" style="left:170px;background:linear-gradient(90deg,rgba(0,0,0,0) 0.60px,rgba(236,242,250,0.45) 0.60px,rgba(236,242,250,0.45) 1.60px,#6f9ad8 1.60px,#6f9ad8 2.85px,rgba(0,0,0,0) 2.85px)"></div>
  <div class="fs" style="left:170px;background:linear-gradient(90deg,rgba(0,0,0,0) 1.60px,#a2bde5 1.60px,#a2bde5 2.70px,rgba(0,0,0,0) 2.70px)"></div>
  <div class="ds" style="left:295px;background:linear-gradient(90deg,rgba(0,0,0,0) 1.85px,#dbe1ef 1.85px,#dbe1ef 3.00px,rgba(0,0,0,0) 3.00px)"></div>
  <div class="hs" style="left:295px;background:linear-gradient(90deg,rgba(0,0,0,0) 0.85px,rgba(236,242,250,0.45) 0.85px,rgba(236,242,250,0.45) 1.85px,#6f9ad8 1.85px,#6f9ad8 3.10px,rgba(0,0,0,0) 3.10px)"></div>
  <div class="fs" style="left:295px;background:linear-gradient(90deg,rgba(0,0,0,0) 1.85px,#a2bde5 1.85px,#a2bde5 2.95px,rgba(0,0,0,0) 2.95px)"></div>
  <div class="ds" style="left:406px;background:linear-gradient(90deg,rgba(0,0,0,0) 1.80px,#dbe1ef 1.80px,#dbe1ef 2.95px,rgba(0,0,0,0) 2.95px)"></div>
  <div class="hs" style="left:406px;background:linear-gradient(90deg,rgba(0,0,0,0) 0.80px,rgba(236,242,250,0.45) 0.80px,rgba(236,242,250,0.45) 1.80px,#6f9ad8 1.80px,#6f9ad8 3.05px,rgba(0,0,0,0) 3.05px)"></div>
  <div class="fs" style="left:406px;background:linear-gradient(90deg,rgba(0,0,0,0) 1.80px,#a2bde5 1.80px,#a2bde5 2.90px,rgba(0,0,0,0) 2.90px)"></div>
  <div class="ds" style="left:553px;background:linear-gradient(90deg,rgba(0,0,0,0) 1.00px,#dbe1ef 1.00px,#dbe1ef 2.15px,rgba(0,0,0,0) 2.15px)"></div>
  <div class="hs" style="left:553px;background:linear-gradient(90deg,rgba(0,0,0,0) 0.00px,rgba(236,242,250,0.45) 0.00px,rgba(236,242,250,0.45) 1.00px,#6f9ad8 1.00px,#6f9ad8 2.25px,rgba(0,0,0,0) 2.25px)"></div>
  <div class="fs" style="left:553px;background:linear-gradient(90deg,rgba(0,0,0,0) 1.00px,#a2bde5 1.00px,#a2bde5 2.10px,rgba(0,0,0,0) 2.10px)"></div>
  <div class="ds" style="left:728px;background:linear-gradient(90deg,rgba(0,0,0,0) 1.10px,#dbe1ef 1.10px,#dbe1ef 2.25px,rgba(0,0,0,0) 2.25px)"></div>
  <div class="hs" style="left:728px;background:linear-gradient(90deg,rgba(0,0,0,0) 0.10px,rgba(236,242,250,0.45) 0.10px,rgba(236,242,250,0.45) 1.10px,#6f9ad8 1.10px,#6f9ad8 2.35px,rgba(0,0,0,0) 2.35px)"></div>
  <div class="fs" style="left:728px;background:linear-gradient(90deg,rgba(0,0,0,0) 1.10px,#a2bde5 1.10px,#a2bde5 2.20px,rgba(0,0,0,0) 2.20px)"></div>

  <div class="ht" style="left:22.3px">Datum</div>
  <div class="ht" style="left:117px">Zeit</div>
  <div class="ht" style="left:180px">Kurzinfo</div>
  <div class="ht" style="left:305px">Aktion</div>
  <div class="ht" style="left:416.5px">Wert alt</div>
  <div class="ht" style="left:562.7px">Wert neu</div>
  <div class="fin" style="left:416.7px;width:93.6px"></div>
  <div class="fbt" style="left:513.2px"><svg class="abs" style="left:4.3px;top:6.2px" width="13" height="11" viewBox="0 0 13 11"><defs><linearGradient id="fn" x1="0" y1="0" x2="0" y2="1"><stop offset="0" stop-color="#7b8189"/><stop offset="0.5" stop-color="#5e646c"/><stop offset="1" stop-color="#1e2024"/></linearGradient></defs><path d="M0.2,0.3 H12.2 L8.1,5.4 V9.9 H4.8 V5.4 Z" fill="url(#fn)"/><path d="M2.9,1.4 H9.6 L6.4,5.2 Z" fill="#c9d1da"/></svg></div>
  <div class="fin" style="left:563.1px;width:93.6px"></div>
  <div class="fbt" style="left:659.7px"><svg class="abs" style="left:4.3px;top:6.2px" width="13" height="11" viewBox="0 0 13 11"><defs><linearGradient id="fn" x1="0" y1="0" x2="0" y2="1"><stop offset="0" stop-color="#7b8189"/><stop offset="0.5" stop-color="#5e646c"/><stop offset="1" stop-color="#1e2024"/></linearGradient></defs><path d="M0.2,0.3 H12.2 L8.1,5.4 V9.9 H4.8 V5.4 Z" fill="url(#fn)"/><path d="M2.9,1.4 H9.6 L6.4,5.2 Z" fill="#c9d1da"/></svg></div>
  <div id="sb"><div id="thumb"></div>
    <svg class="abs" style="left:1px;top:0" width="18" height="17" viewBox="0 0 18 17"><path d="M5.6 8.7 L10.8 4.9 L10.8 12.5 Z" fill="#a3a3a3"/></svg>
  </div>
  <div id="gbot"></div>
  <svg class="abs" style="left:0;top:0;pointer-events:none" width="738" height="150" viewBox="2 2 738 150">
<defs>
<filter id="sh" x="-20%" y="-20%" width="140%" height="140%"><feGaussianBlur in="SourceAlpha" stdDeviation="1.3"/><feOffset dx="1.2" dy="1.2"/><feComponentTransfer><feFuncA type="linear" slope="0.55"/></feComponentTransfer><feMerge><feMergeNode/><feMergeNode in="SourceGraphic"/></feMerge></filter>
</defs>
<g filter="url(#sh)">
<rect x="213.8" y="69.05" width="76.4" height="35.2" fill="none" stroke="#1fa889" stroke-width="3.3"/>
</g>
<g filter="url(#sh)">
<path d="M144.6,26.4 L203.5,58.2" stroke="#ef4040" stroke-width="4" stroke-linecap="round" fill="none"/>
<path d="M212,63.2 L198.4,62.5 L204.2,51.9 Z" fill="#ef4040"/>
</g>
</svg>
</div>
</body>
</html>
